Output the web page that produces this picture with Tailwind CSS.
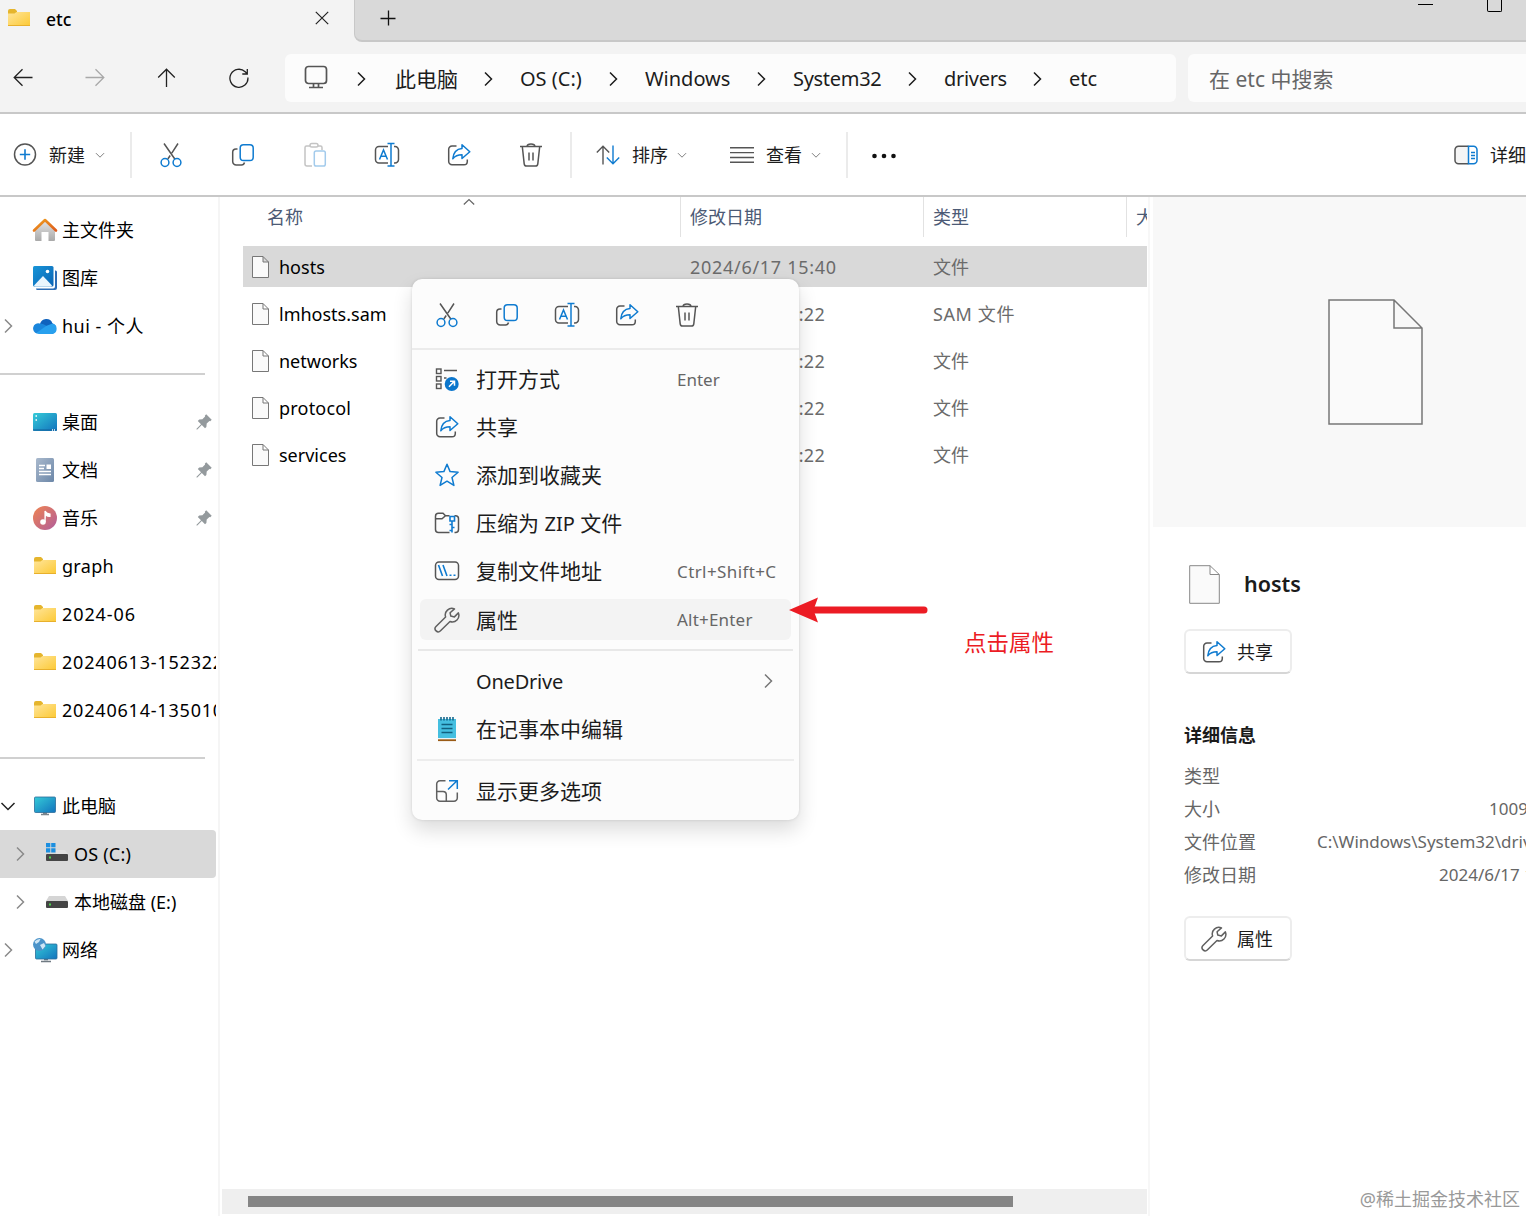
<!DOCTYPE html>
<html lang="zh-CN">
<head>
    <meta charset="UTF-8">
    <meta name="viewport" content="width=device-width, initial-scale=1.0">
    <title>etc</title>
    <script src="https://cdn.jsdelivr.net/npm/@tailwindcss/browser@4"></script>
</head>
<body class="relative flex h-[1216px] w-[1526px] flex-col overflow-hidden bg-white font-['Noto_Sans','Noto_Sans_CJK_SC',sans-serif] text-[18px] leading-6 whitespace-nowrap text-black">

    <!-- Shared icons -->
    <svg class="absolute h-0 w-0">
        <defs>
            <linearGradient id="gFolder" x1="0" y1="0" x2="1" y2="1"><stop offset="0" stop-color="#ffe59a"/><stop offset="1" stop-color="#fcc934"/></linearGradient>
            <linearGradient id="gScreen" x1="0" y1="0" x2="1" y2="1"><stop offset="0" stop-color="#35cbd8"/><stop offset="1" stop-color="#1273bd"/></linearGradient>
            <linearGradient id="gRoof" x1="0" y1="0" x2="1" y2="1"><stop offset="0" stop-color="#f0a01e"/><stop offset="1" stop-color="#dd5a1c"/></linearGradient>
            <linearGradient id="gWall" x1="0" y1="0" x2="0" y2="1"><stop offset="0" stop-color="#e6e6e6"/><stop offset="1" stop-color="#a9a9a9"/></linearGradient>
            <linearGradient id="gBlue" x1="0" y1="0" x2="1" y2="1"><stop offset="0" stop-color="#1795d8"/><stop offset="1" stop-color="#0c64b4"/></linearGradient>
            <linearGradient id="gMusic" x1="0" y1="0" x2="1" y2="1"><stop offset="0" stop-color="#f08451"/><stop offset="1" stop-color="#b05c9c"/></linearGradient>
            <linearGradient id="gDoc" x1="0" y1="0" x2="1" y2="1"><stop offset="0" stop-color="#a9b9cd"/><stop offset="1" stop-color="#6c87a8"/></linearGradient>
        </defs>
        <symbol id="folder" viewBox="0 0 24 20">
            <path d="M1 3a2 2 0 0 1 2-2h5l2 2v3H1z" fill="#e5b52d"/>
            <path d="M1 5.500h6.500l2-1.500H23v14H1z" fill="url(#gFolder)"/>
            <path d="M1 17.500h22" stroke="#e8b02c"/>
        </symbol>
        <symbol id="chev-r" viewBox="0 0 16 16"><path d="M5 1.500 11.500 8 5 14.500" fill="none" stroke="currentColor" stroke-width="1.500"/></symbol>
        <symbol id="chev-d" viewBox="0 0 16 16"><path d="M1.500 5 8 11.500 14.500 5" fill="none" stroke="currentColor" stroke-width="1.500"/></symbol>
        <symbol id="cut" viewBox="0 0 24 26">
            <g fill="none" stroke-width="1.500">
                <path d="M5 1.500 15.800 17M19 1.500 12.800 11.200M11.200 13.500 8.800 17" stroke="#555"/>
                <circle cx="6" cy="20.500" r="3.900" stroke="#0f7bd0"/><circle cx="18" cy="20.500" r="3.900" stroke="#0f7bd0"/>
            </g>
        </symbol>
        <symbol id="copy" viewBox="0 0 24 24">
            <g fill="none" stroke-width="1.500">
                <path d="M6.500 6H5a3.300 3.300 0 0 0-3.300 3.300v9.200a3.500 3.500 0 0 0 3.500 3.500H10.500a3.300 3.300 0 0 0 3-2.500" stroke="#555"/>
                <rect x="9.200" y="1.800" width="13" height="15.800" rx="3.300" stroke="#0f7bd0"/>
            </g>
        </symbol>
        <symbol id="paste" viewBox="0 0 24 26">
            <g fill="none" stroke-width="1.500">
                <path d="M7 4H3.500A1.500 1.500 0 0 0 2 5.500V22a2 2 0 0 0 2 2h5M15 4h2.500A1.500 1.500 0 0 1 19 5.500V8" stroke="#c4c4c4"/>
                <rect x="7" y="1.500" width="8" height="3.500" rx="1.750" stroke="#c4c4c4"/>
                <rect x="11.300" y="9" width="11" height="15" rx="1.800" stroke="#a3cbec"/>
            </g>
        </symbol>
        <symbol id="rename" viewBox="0 0 26 26">
            <g fill="none" stroke-width="1.500">
                <path d="M14 4.500H5A3.500 3.500 0 0 0 1.500 8v9.500A3.500 3.500 0 0 0 5 21h9M20 4.500h1A3.500 3.500 0 0 1 24.500 8v9.500A3.500 3.500 0 0 1 21 21h-1" stroke="#555"/>
                <path d="M17 1.500v22.500M13.500 1.500h7M13.500 24h7M5.500 17.500 9.500 8l4 9.500M7 14.300h5" stroke="#0f7bd0"/>
            </g>
        </symbol>
        <symbol id="share" viewBox="0 0 24 24">
            <g fill="none" stroke-width="1.500" stroke-linejoin="round">
                <path d="M9.500 3H5A3.300 3.300 0 0 0 1.700 6.300V18.500A3.300 3.300 0 0 0 5 21.800H17A3.300 3.300 0 0 0 20.300 18.500V16.500" stroke="#555"/>
                <path d="M15 1.700 22.800 8.800 15 15.500V11.800C11 11.800 8 13 5.800 15.800 6.300 10 9.500 6 15 5.500Z" stroke="#0f7bd0"/>
            </g>
        </symbol>
        <symbol id="trash" viewBox="0 0 24 26">
            <g fill="none" stroke="#555" stroke-width="1.500">
                <path d="M1 4.500h22M8 4.500C8.300 1 15.700 1 16 4.500M3.300 4.500 5.200 21.800A2.500 2.500 0 0 0 7.700 24h8.600a2.500 2.500 0 0 0 2.500-2.200L20.700 4.500M10 10.500v8M14 10.500v8"/>
            </g>
        </symbol>
        <symbol id="wrench" viewBox="0 0 26 26">
            <path d="M20.500 1.900A6.600 6.600 0 0 0 11.600 10L2 19.500a3 3 0 0 0 4.500 4.300L16 14.500a6.600 6.600 0 0 0 8.400-8.600l-4 4-3.600-.8-.7-3.300z" fill="none" stroke="#606060" stroke-width="1.500" stroke-linejoin="round"/>
        </symbol>
        <symbol id="file" viewBox="0 0 17 22"><path d="M.5.500H11L16.500 6V21.500H.5zM11 .5V6h5.500" fill="#fafafa" stroke="#777"/></symbol>
        <symbol id="pin" viewBox="0 0 16 16"><path d="M10.200.300 15.700 5.800 14.300 7.200 13.400 6.900 10.700 9.600 10.400 12.900 9 14.300 5.800 11.100 1.300 15.500H.5v-.8L5 10.200 1.800 7 3.200 5.600 6.400 5.300 9.100 2.600 8.800 1.700z" fill="#949a9d"/></symbol>
        <symbol id="pc" viewBox="0 0 24 20"><path d="M8 18.500h8M10 17h4" stroke="#7a858d" stroke-width="1.500"/><rect x="1.500" y="1" width="21" height="15.500" rx="1" fill="url(#gScreen)" stroke="#2b6c99" stroke-width=".8"/></symbol>
        <symbol id="drive" viewBox="0 0 24 14"><path d="M4 1h16l3 5H1z" fill="#d5d5d5"/><rect x="1" y="6" width="22" height="7" rx="1" fill="#454545"/><rect x="4" y="8.500" width="2" height="2" fill="#4ed64e"/></symbol>
    </svg>

    <!-- Tab strip -->
    <header class="flex h-[42px] shrink-0 bg-[#f3f3f3]">
        <div class="flex w-[354px] items-center pb-[6px]">
            <svg class="ml-[7px] h-5 w-6"><use href="#folder"/></svg>
            <span class="ml-[15px] w-[269px] pt-[1px] text-[17.500px] font-medium">etc</span>
            <svg class="h-[14px] w-[14px]" viewBox="0 0 14 14"><path d="m.8.800 12.400 12.400M13.200.800.800 13.200" stroke="#222" stroke-width="1.200"/></svg>
        </div>
        <div class="flex flex-1 justify-between rounded-bl-lg border-b-2 border-l border-[#c8c8c8] bg-[#d9d9d9]">
            <svg class="mt-[10px] ml-[25px] h-4 w-4" viewBox="0 0 16 16"><path d="M8.500 .5v15M.5 8.500h15" stroke="#111" stroke-width="1.300"/></svg>
            <div class="flex">
                <div class="mt-1 mr-[54px] h-px w-[15px] bg-black"></div>
                <div class="mr-6 h-3 w-[15px] rounded-b-[2px] border-[1.500px] border-t-0 border-black"></div>
            </div>
        </div>
    </header>

    <!-- Address bar -->
    <nav class="flex h-[72px] shrink-0 border-b-2 border-[#c8c8c8] bg-[#f3f3f3] text-[20px] text-[#1c1c1c]">
        <div class="-ml-[13px] flex items-center pt-[2px]">
            <div class="flex w-[72px] justify-center"><svg class="h-5 w-5" viewBox="0 0 20 20"><path d="M19.500 9.500H1.500M9.500 1.200 1.200 9.500l8.300 8.300" fill="none" stroke="#222" stroke-width="1.300"/></svg></div>
            <div class="flex w-[72px] justify-center"><svg class="h-5 w-5" viewBox="0 0 20 20"><path d="M.5 9.500h18M10.500 1.200l8.300 8.300-8.300 8.300" fill="none" stroke="#a8a8a8" stroke-width="1.300"/></svg></div>
            <div class="flex w-[72px] justify-center"><svg class="h-5 w-5" viewBox="0 0 20 20"><path d="M9.500 19V1.500M1.200 9.500l8.300-8.300 8.300 8.300" fill="none" stroke="#222" stroke-width="1.300"/></svg></div>
            <div class="flex w-[72px] justify-center"><svg class="h-5 w-5" viewBox="0 0 20 20"><path d="M18.900 9.500a9 9 0 1 1-2.700-5.700l1.800 1.700M18.300 1v5h-5" fill="none" stroke="#222" stroke-width="1.300"/></svg></div>
        </div>
        <div class="mt-3 ml-[10px] flex h-12 w-[891px] items-center rounded-md bg-[#fcfcfc] pt-[2px] pl-[19px]">
            <svg class="-mt-1 h-6 w-6" viewBox="0 0 24 24"><g fill="none" stroke="#555" stroke-width="1.700"><rect x="1.500" y="1.500" width="21" height="17" rx="3"/><path d="M9.500 18.500v3.500M14.500 18.500v3.500M5 22.500h14"/></g></svg>
            <svg class="mr-[26px] ml-[25px] h-4 w-4"><use href="#chev-r"/></svg>
            <span class="w-[63px] text-[21px]">此电脑</span>
            <svg class="mr-6 ml-[22px] h-4 w-4"><use href="#chev-r"/></svg>
            <span class="w-[63px]">OS (C:)</span>
            <svg class="mr-6 ml-[22px] h-4 w-4"><use href="#chev-r"/></svg>
            <span class="w-[86px]">Windows</span>
            <svg class="mr-6 ml-[22px] h-4 w-4"><use href="#chev-r"/></svg>
            <span class="w-[89px] -tracking-[.3px]">System32</span>
            <svg class="mr-6 ml-[22px] h-4 w-4"><use href="#chev-r"/></svg>
            <span class="w-[63px] -tracking-[.3px]">drivers</span>
            <svg class="mr-6 ml-[22px] h-4 w-4"><use href="#chev-r"/></svg>
            <span>etc</span>
        </div>
        <div class="mt-3 ml-3 flex h-12 flex-1 items-center rounded-l-md bg-[#fcfcfc] pt-[2px] pl-[21px] text-[21px] text-[#666]">在 etc 中搜索</div>
    </nav>

    <!-- Command bar -->
    <div class="flex h-[83px] shrink-0 items-center border-b-2 border-[#c8c8c8] bg-white text-[#1c1c1c]">
        <svg class="ml-[13px] h-6 w-6" viewBox="0 0 24 24"><circle cx="12" cy="11.500" r="10.500" fill="none" stroke="#555" stroke-width="1.500"/><path d="M12 6.300v10.400M6.800 11.500h10.400" stroke="#0f7bd0" stroke-width="1.600"/></svg>
        <span class="ml-[12px]">新建</span>
        <svg class="ml-[10px] h-[10px] w-[10px] text-[#777]"><use href="#chev-d"/></svg>
        <div class="ml-[25px] h-[46px] w-[2px] bg-[#ebebeb]"></div>
        <div class="ml-[3px] flex">
            <div class="flex w-[72px] items-center justify-center"><svg class="h-[26px] w-6"><use href="#cut"/></svg></div>
            <div class="flex w-[72px] items-center justify-center"><svg class="h-6 w-6"><use href="#copy"/></svg></div>
            <div class="flex w-[72px] items-center justify-center"><svg class="h-[26px] w-6"><use href="#paste"/></svg></div>
            <div class="flex w-[72px] items-center justify-center"><svg class="h-[26px] w-[26px]"><use href="#rename"/></svg></div>
            <div class="flex w-[72px] items-center justify-center"><svg class="h-6 w-6"><use href="#share"/></svg></div>
            <div class="flex w-[72px] items-center justify-center"><svg class="h-[26px] w-6"><use href="#trash"/></svg></div>
        </div>
        <div class="ml-[3px] h-[46px] w-[2px] bg-[#ebebeb]"></div>
        <svg class="ml-6 h-5 w-6" viewBox="0 0 24 20"><g fill="none" stroke-width="1.400"><path d="M7 19.500V1.200M.8 7.500 7 1.200l6.200 6.300" stroke="#555"/><path d="M17 .5v18.300M10.800 12.500l6.200 6.300 6.200-6.300" stroke="#0f7bd0"/></g></svg>
        <span class="ml-[12px]">排序</span>
        <svg class="ml-[9px] h-[10px] w-[10px] text-[#777]"><use href="#chev-d"/></svg>
        <svg class="ml-[43px] h-5 w-6" viewBox="0 0 24 20"><path d="M0 2.700h24M0 7.600h24M0 12.500h24M0 17.300h24" stroke="#555" stroke-width="1.400"/></svg>
        <span class="ml-[12px]">查看</span>
        <svg class="ml-[9px] h-[10px] w-[10px] text-[#777]"><use href="#chev-d"/></svg>
        <div class="ml-[25px] h-[46px] w-[2px] bg-[#ebebeb]"></div>
        <svg class="ml-6 h-6 w-6" viewBox="0 0 24 24"><g fill="#111"><circle cx="2.500" cy="13" r="2.300"/><circle cx="12" cy="13" r="2.300"/><circle cx="21.500" cy="13" r="2.300"/></g></svg>
        <svg class="ml-auto h-5 w-6" viewBox="0 0 24 20"><g fill="none" stroke-width="1.500"><path d="M14.500 1.200H4.500A3.500 3.500 0 0 0 1 4.700v10.600a3.500 3.500 0 0 0 3.500 3.500h10" stroke="#555" fill="#f5f5f5"/><path d="M14.500 1.200h5A3.500 3.500 0 0 1 23 4.700v10.600a3.500 3.500 0 0 1-3.500 3.500h-5zM17 7.500h4M17 10.500h4M17 13.500h4" stroke="#0f7bd0"/></g></svg>
        <span class="ml-3 w-9">详细</span>
    </div>

    <main class="flex min-h-0 flex-1">
        <!-- Navigation pane -->
        <aside class="w-[220px] shrink-0 overflow-hidden border-r-2 border-[#f5f5f5] pt-[9px]">
            <div class="w-[216px] overflow-hidden">
                <div class="flex h-12 items-center pl-8">
                    <svg class="mr-[5px] h-6 w-[26px]" viewBox="0 0 26 24"><path d="M3 11 13 2l10 9v11a1 1 0 0 1-1 1h-5.500v-9h-7v9H4a1 1 0 0 1-1-1z" fill="url(#gWall)"/><path d="M2 12.500 13 2l11 10.500" fill="none" stroke="url(#gRoof)" stroke-width="2.600" stroke-linecap="round" stroke-linejoin="round"/></svg>
                    <span class="-ml-[1px]">主文件夹</span>
                </div>
                <div class="flex h-12 items-center pl-8">
                    <svg class="mr-1 h-[26px] w-[26px]" viewBox="0 0 26 26"><path d="M23 5.500h.5a1.500 1.500 0 0 1 1.500 1.500v16a2 2 0 0 1-2 2H5.500A1.500 1.500 0 0 1 4 23.500h17a2 2 0 0 0 2-2z" fill="#2b6cb5"/><rect x="1" y="1" width="20.500" height="20.500" rx="1.500" fill="url(#gBlue)"/><path d="m2 20.500 9-9.500 9 9.500q-.5 1-1.500 1h-15q-1 0-1.500-1z" fill="#eaf5fd"/><circle cx="15.500" cy="6.500" r="1.800" fill="#fff"/></svg>
                    <span>图库</span>
                </div>
                <div class="flex h-12 items-center">
                    <svg class="h-4 w-4 text-[#8a8a8a]"><use href="#chev-r"/></svg>
                    <svg class="mr-1 ml-[17px] h-[18px] w-[25px]" viewBox="0 0 25 18"><path d="M7 7a6.500 6.500 0 0 1 12.400-.8A5.700 5.700 0 0 1 19 17H6.500A5.500 5.500 0 0 1 7 7z" fill="#0f62bd"/><path d="M6.500 6.500c3 0 5 1 7 2.500L4 16.500A5 5 0 0 1 6.500 6.500z" fill="#1a86dc"/><path d="m13 9 6.500-2.500A5.400 5.400 0 0 1 19.500 17H6.500q-2 0-3.200-1z" fill="#28a0ee"/></svg>
                    <span class="tracking-[.5px]">hui - 个人</span>
                </div>
                <div class="flex h-12 items-center"><div class="h-[2px] w-[205px] bg-[#d0d0d0]"></div></div>
                <div class="flex h-12 items-center pr-[4px] pl-8">
                    <svg class="mr-1 h-5 w-[26px]" viewBox="0 0 26 20"><rect x="1" y="1" width="24" height="18" rx="1.500" fill="url(#gScreen)"/><path d="M1 18h24" stroke="#1566a0" stroke-width="1.200"/><path d="M3.500 4h1.500M3.500 8h1.500M20 18h1M22 18h1" stroke="#fff" stroke-width="1.500"/></svg>
                    <span class="flex-1">桌面</span>
                    <svg class="h-4 w-4"><use href="#pin"/></svg>
                </div>
                <div class="flex h-12 items-center pr-[4px] pl-8">
                    <svg class="mr-1 h-[26px] w-[26px]" viewBox="0 0 26 26"><rect x="4" y="1" width="18" height="24" rx="1.500" fill="url(#gDoc)"/><path d="M7 8.500h6M7 11.500h5M7 14.500h12M7 17.500h12" stroke="#fff" stroke-width="1.300"/><rect x="14.500" y="7.500" width="4.500" height="4.500" fill="#fff"/></svg>
                    <span class="flex-1">文档</span>
                    <svg class="h-4 w-4"><use href="#pin"/></svg>
                </div>
                <div class="flex h-12 items-center pr-[4px] pl-8">
                    <svg class="mr-1 h-[26px] w-[26px]" viewBox="0 0 26 26"><circle cx="13" cy="13" r="12" fill="url(#gMusic)"/><circle cx="11" cy="17" r="2.800" fill="#fff"/><path d="M13 17V6q1 2.500 5 3v2.500q-2.500 0-4-1.300" fill="#fff" stroke="#fff" stroke-width="1.200"/></svg>
                    <span class="flex-1">音乐</span>
                    <svg class="h-4 w-4"><use href="#pin"/></svg>
                </div>
                <div class="flex h-12 items-center pl-[33px]"><svg class="mr-[5px] h-5 w-6"><use href="#folder"/></svg><span class="tracking-[.3px]">graph</span></div>
                <div class="flex h-12 items-center pl-[33px]"><svg class="mr-[5px] h-5 w-6"><use href="#folder"/></svg><span class="tracking-[.9px]">2024-06</span></div>
                <div class="flex h-12 items-center pl-[33px]"><svg class="mr-[5px] h-5 w-6 shrink-0"><use href="#folder"/></svg><span class="tracking-[.8px]">20240613-152322</span></div>
                <div class="flex h-12 items-center pl-[33px]"><svg class="mr-[5px] h-5 w-6 shrink-0"><use href="#folder"/></svg><span class="tracking-[.8px]">20240614-135010</span></div>
                <div class="flex h-12 items-center"><div class="h-[2px] w-[205px] bg-[#d0d0d0]"></div></div>
                <div class="flex h-12 items-center">
                    <svg class="h-4 w-4 text-[#222]"><use href="#chev-d"/></svg>
                    <svg class="mr-[5px] ml-[17px] h-5 w-6"><use href="#pc"/></svg>
                    <span>此电脑</span>
                </div>
                <div class="flex h-12 items-center rounded-r-sm bg-[#d9d9d9] pl-3">
                    <svg class="h-4 w-4 text-[#8a8a8a]"><use href="#chev-r"/></svg>
                    <svg class="mr-[5px] -mt-1 ml-[17px] h-5 w-6" viewBox="0 0 24 20"><path d="M11 8h9l3 4H11z" fill="#e2e2e2"/><rect x="1" y="12" width="22" height="7" rx="1" fill="#454545"/><rect x="4" y="14.500" width="2" height="2" fill="#4ed64e"/><path d="M1 1h4.300v4.300H1zM6.200 1h4.300v4.300H6.200zM1 6.200h4.300v4.300H1zM6.200 6.200h4.300v4.300H6.200z" fill="#1c8fe0"/></svg>
                    <span class="tracking-[.2px]">OS (C:)</span>
                </div>
                <div class="flex h-12 items-center pl-3">
                    <svg class="h-4 w-4 text-[#8a8a8a]"><use href="#chev-r"/></svg>
                    <svg class="mr-[5px] ml-[17px] h-[14px] w-6"><use href="#drive"/></svg>
                    <span>本地磁盘 (E:)</span>
                </div>
                <div class="flex h-12 items-center">
                    <svg class="h-4 w-4 text-[#8a8a8a]"><use href="#chev-r"/></svg>
                    <svg class="mr-[4px] ml-4 h-[26px] w-[26px]" viewBox="0 0 26 26"><path d="M9 24.500h10M12 22.500h4" stroke="#6f7a82" stroke-width="1.500"/><rect x="3.500" y="7" width="21.500" height="15" rx="1" fill="url(#gScreen)" stroke="#2b6c99" stroke-width=".8"/><circle cx="7.500" cy="7.500" r="6.500" fill="#4b93c9"/><path d="M2.500 4.500q3-3 6-2.500l-1.500 3-3 2zM8 8l4-2 1.500 3-3 3.500z" fill="#cfe6f5"/></svg>
                    <span>网络</span>
                </div>
            </div>
        </aside>

        <!-- File list -->
        <section class="flex w-[928px] shrink-0 flex-col">
            <div class="relative flex h-[49px] w-[927px] overflow-hidden text-[#4c5a75]">
                <svg class="absolute top-0 left-[243px] h-[10px] w-3 text-[#666]" viewBox="0 0 12 10"><path d="m.8 7.500 5.200-5 5.200 5" fill="none" stroke="currentColor" stroke-width="1.200"/></svg>
                <div class="h-10 w-[460px] shrink-0 pt-2 pl-[47px]">名称</div>
                <div class="h-10 w-[243px] shrink-0 border-l border-[#e2e2e2] pt-2 pl-[9px]">修改日期</div>
                <div class="h-10 w-[203px] shrink-0 border-l border-[#e2e2e2] pt-2 pl-[9px]">类型</div>
                <div class="h-10 w-[21px] shrink-0 overflow-hidden border-l border-[#e2e2e2] pt-2 pl-[9px]">大小</div>
            </div>
            <div class="ml-[23px] flex w-[904px] flex-col gap-[6px] text-[#6b6b6b]">
                <div class="flex h-[41px] items-center bg-[#d9d9d9] pl-[9px]"><svg class="h-[22px] w-[17px]"><use href="#file"/></svg><span class="ml-[10px] w-[411px] text-black">hosts</span><span class="w-[243px] tracking-[.7px]">2024/6/17 15:40</span><span>文件</span></div>
                <div class="flex h-[41px] items-center pl-[9px]"><svg class="h-[22px] w-[17px]"><use href="#file"/></svg><span class="ml-[10px] w-[411px] text-black">lmhosts.sam</span><span class="w-[243px] tracking-[.3px]">2022/5/7 &nbsp;13:22</span><span class="tracking-[.6px]">SAM 文件</span></div>
                <div class="flex h-[41px] items-center pl-[9px]"><svg class="h-[22px] w-[17px]"><use href="#file"/></svg><span class="ml-[10px] w-[411px] text-black">networks</span><span class="w-[243px] tracking-[.3px]">2022/5/7 &nbsp;13:22</span><span>文件</span></div>
                <div class="flex h-[41px] items-center pl-[9px]"><svg class="h-[22px] w-[17px]"><use href="#file"/></svg><span class="ml-[10px] w-[411px] tracking-[.2px] text-black">protocol</span><span class="w-[243px] tracking-[.3px]">2022/5/7 &nbsp;13:22</span><span>文件</span></div>
                <div class="flex h-[41px] items-center pl-[9px]"><svg class="h-[22px] w-[17px]"><use href="#file"/></svg><span class="ml-[10px] w-[411px] text-black">services</span><span class="w-[243px] tracking-[.3px]">2022/5/7 &nbsp;13:22</span><span>文件</span></div>
            </div>
            <div class="mt-auto mb-[2px] ml-[2px] h-[25px] w-[925px] bg-[#efefef] pt-[7px] pl-[26px]">
                <div class="h-[11px] w-[765px] bg-[#858585]"></div>
            </div>
        </section>

        <!-- Details pane -->
        <section class="flex min-w-0 flex-1 flex-col overflow-hidden border-l-2 border-[#f7f7f7] pl-[3px] text-[#666]">
            <div class="h-[330px] shrink-0 bg-[#f8f8f8] pt-[102px] pl-[175px]">
                <svg class="h-[126px] w-[95px]" viewBox="0 0 95 126"><path d="M1 1H66L94 29V125H1zM66 1V29H94" fill="#fafafa" stroke="#777" stroke-width="1.500"/></svg>
            </div>
            <div class="pl-[31px]">
                <div class="mt-[37px] flex h-10 items-center pl-[5px]">
                    <svg class="h-[39px] w-[31px]" viewBox="0 0 31 39"><path d="M.7.700H21L30.300 9.500V38.300H.7zM21 .7V9.500h9.300" fill="#fafafa" stroke="#888"/></svg>
                    <span class="ml-6 text-[21.500px] font-semibold text-[#1b1b1b]">hosts</span>
                </div>
                <button class="mt-[25px] flex h-[45px] w-[108px] items-center rounded-md border-2 border-[#ededed] border-b-[#d6d6d6] bg-white pl-4 text-[#1b1b1b]"><svg class="mr-[11px] h-6 w-6"><use href="#share"/></svg>共享</button>
                <h2 class="mt-[49px] font-bold text-[#1b1b1b]">详细信息</h2>
                <div class="mt-[12px] flex h-[33px] items-center">类型</div>
                <div class="flex h-[33px] items-center"><span class="w-[305px] shrink-0">大小</span><span class="text-[17px]">1009 字节</span></div>
                <div class="flex h-[33px] items-center"><span class="w-[133px] shrink-0">文件位置</span><span class="text-[17px]">C:\Windows\System32\drivers</span></div>
                <div class="flex h-[33px] items-center"><span class="w-[255px] shrink-0">修改日期</span><span class="text-[17px]">2024/6/17 15:40</span></div>
                <button class="mt-[25px] flex h-[45px] w-[108px] items-center rounded-md border-2 border-[#ededed] border-b-[#d6d6d6] bg-white pl-[15px] text-[#1b1b1b]"><svg class="mr-[10px] h-[26px] w-[26px]"><use href="#wrench"/></svg>属性</button>
            </div>
        </section>
    </main>

    <!-- Context menu -->
    <div class="absolute top-[279px] left-[412px] flex h-[541px] w-[387px] flex-col rounded-[10px] bg-[#fcfcfc] text-[21px] text-[#1c1c1c] shadow-[0_10px_20px_rgba(0,0,0,0.14),0_0_3px_rgba(0,0,0,0.12)]">
        <div class="flex h-[71px] items-center border-b-2 border-[#ebebeb] pt-[2px] pl-[5px]">
            <div class="flex w-[60px] items-center justify-center"><svg class="h-[26px] w-6"><use href="#cut"/></svg></div>
            <div class="flex w-[60px] items-center justify-center"><svg class="h-6 w-6"><use href="#copy"/></svg></div>
            <div class="flex w-[60px] items-center justify-center"><svg class="h-[26px] w-[26px]"><use href="#rename"/></svg></div>
            <div class="flex w-[60px] items-center justify-center"><svg class="h-6 w-6"><use href="#share"/></svg></div>
            <div class="flex w-[60px] items-center justify-center"><svg class="h-[26px] w-6"><use href="#trash"/></svg></div>
        </div>
        <div class="flex flex-col px-2 pt-[5px]">
            <div class="flex h-12 items-center pl-[14px]">
                <svg class="h-[26px] w-[26px]" viewBox="0 0 26 26"><g fill="none" stroke="#555" stroke-width="1.400"><rect x="2.500" y="3" width="4.500" height="4.500"/><rect x="2.500" y="10.500" width="4.500" height="4.500"/><rect x="2.500" y="18" width="4.500" height="4.500"/><path d="M10 4.500h13M10 12h2.500"/></g><circle cx="17.700" cy="18" r="7" fill="#0b76cc"/><path d="m15 20.700 5.300-5.300M16 15.200h4.500v4.500" fill="none" stroke="#fff" stroke-width="1.500"/></svg>
                <span class="ml-4 w-[201px]">打开方式</span><span class="pt-[2px] text-[17px] text-[#666]">Enter</span>
            </div>
            <div class="flex h-12 items-center pl-[15px]"><svg class="h-6 w-6"><use href="#share"/></svg><span class="ml-[17px]">共享</span></div>
            <div class="flex h-12 items-center pl-[14px]"><svg class="h-[26px] w-[26px]" viewBox="0 0 26 26"><path d="m13 2.200 3.100 7.400 8 .7-6.100 5.200 1.900 7.900-6.900-4.200-6.900 4.200 1.900-7.900-6.100-5.200 8-.7z" fill="none" stroke="#0f7bd0" stroke-width="1.500" stroke-linejoin="round"/></svg><span class="ml-4">添加到收藏夹</span></div>
            <div class="flex h-12 items-center pl-[14px]"><svg class="h-[26px] w-[26px]" viewBox="0 0 26 26"><g fill="none" stroke="#555" stroke-width="1.500"><path d="M15.500 5.800h-4L9 3.300H4.500A3 3 0 0 0 1.500 6.300V19.500A3 3 0 0 0 4.500 22.500h11M20.500 5.800h1A3 3 0 0 1 24.500 8.800V19.500A3 3 0 0 1 21.500 22.500h-1M1.500 8.800H8L11.500 5.800"/></g><path d="M16 6.500h4.500V11H16zM18 11v11.500M15.500 14.500H18M18 17.500h2.500M15.500 20.500H18" fill="none" stroke="#0f7bd0" stroke-width="1.600"/></svg><span class="ml-4">压缩为 <span class="text-[20px]">ZIP</span> 文件</span></div>
            <div class="flex h-12 items-center pl-[14px]"><svg class="h-[26px] w-[26px]" viewBox="0 0 26 26"><rect x="1.500" y="4" width="23" height="17.500" rx="3.500" fill="none" stroke="#555" stroke-width="1.500"/><path d="m4.500 7 4 11M9 7l4 11M15.500 17.200h2M19.500 17.200h2" stroke="#0f7bd0" stroke-width="1.600"/></svg><span class="ml-4 w-[201px]">复制文件地址</span><span class="pt-[2px] text-[17px] tracking-[.4px] text-[#666]">Ctrl+Shift+C</span></div>
            <div class="mt-1 flex h-[41px] items-center rounded-md bg-[#f3f3f3] pl-[14px]"><svg class="h-[26px] w-[26px]"><use href="#wrench"/></svg><span class="ml-4 w-[201px]">属性</span><span class="pt-[1px] text-[17px] tracking-[.2px] text-[#666]">Alt+Enter</span></div>
        </div>
        <div class="mx-[6px] mt-[9px] h-[2px] bg-[#e8e8e8]"></div>
        <div class="mt-[6px] flex h-12 items-center pr-[23px] pl-16"><span class="flex-1 pt-[1px] text-[20px] -tracking-[.2px]">OneDrive</span><svg class="h-4 w-4 text-[#777]"><use href="#chev-r"/></svg></div>
        <div class="flex h-12 items-center pl-[22px]"><svg class="h-[26px] w-[26px]" viewBox="0 0 26 26"><path d="M4 3h18v20H4z" fill="#45bfe0"/><path d="M4 22.500h18" stroke="#e8f4f8"/><path d="M4 24.200h18" stroke="#9a5b16" stroke-width="1.800"/><path d="M7 1v3.500M10 1v3.500M13 1v3.500M16 1v3.500M19 1v3.500" stroke="#14678c" stroke-width="1.600"/><path d="M7.500 8.500h11M7.500 12.500h11M7.500 16.500h11" stroke="#11607f" stroke-width="1.600"/></svg><span class="ml-4">在记事本中编辑</span></div>
        <div class="mx-[5px] mt-[6px] h-[2px] bg-[#ededed]"></div>
        <div class="mt-[6px] flex h-12 items-center pl-[23px]"><svg class="h-6 w-6" viewBox="0 0 24 24"><g fill="none" stroke-width="1.500"><path d="M10.500 1.700H5A3.300 3.300 0 0 0 1.700 5V19A3.300 3.300 0 0 0 5 22.300H19A3.300 3.300 0 0 0 22.300 19V13.500M1.700 12.500H8A3.300 3.300 0 0 1 11.300 15.800V22.300" stroke="#606060"/><path d="M13 10.500 22 1.700M14 1.700h8.300V10" stroke="#0f7bd0"/></g></svg><span class="ml-[17px]">显示更多选项</span></div>
    </div>

    <!-- Arrow and note drawn on top -->
    <svg class="absolute top-[596px] left-[789px] h-7 w-[139px]" viewBox="0 0 139 28"><path d="M24 14H135" stroke="#ec1c24" stroke-width="7" stroke-linecap="round"/><path d="M0 14 29 1.500 24.500 14 29 26.500z" fill="#ec1c24"/></svg>
    <p class="absolute top-[631px] left-[964px] text-[22.500px] text-[#ec1c24]">点击属性</p>
    <p class="absolute top-[1187px] right-[6px] text-[18px] text-[#999]">@稀土掘金技术社区</p>
</body>
</html>
